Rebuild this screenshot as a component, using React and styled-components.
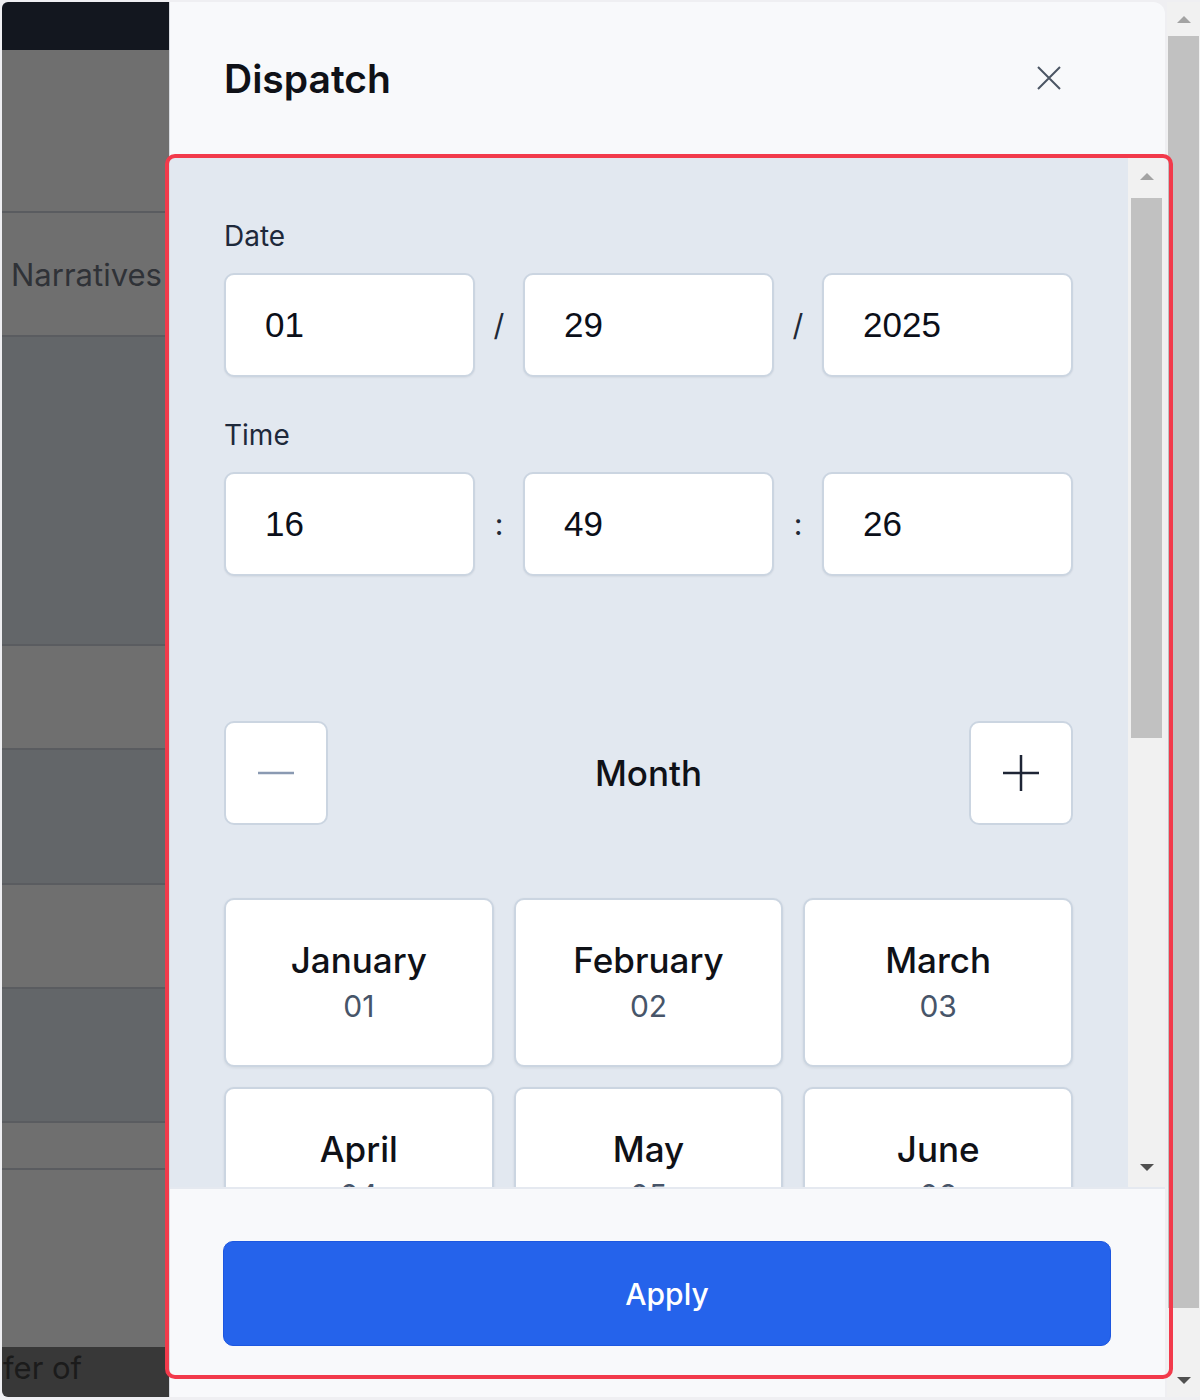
import React from "react";
import styled, { createGlobalStyle } from "styled-components";

const GlobalStyle = createGlobalStyle`
  * { box-sizing: border-box; }
  body {
    margin: 0;
    background: #efeff2;
    font-family: Inter, "Noto Sans", sans-serif;
  }
`;

const Screen = styled.div`
  position: relative;
  display: flex;
  width: 1200px;
  height: 1400px;
  padding: 2px 0 3px 2px;
  background: #efeff2;
`;

const Backdrop = styled.div`
  width: 167px;
  display: flex;
  flex-direction: column;
  border-radius: 6px 0 0 6px;
  overflow: hidden;
`;

const BackRow = styled.div`
  flex: ${(p) => (p.$grow ? 1 : "none")};
  height: ${(p) => p.$h}px;
  background: ${(p) => p.$bg};
  border-bottom: ${(p) => (p.$line ? "2px solid #5a5c60" : "none")};
  display: flex;
  align-items: center;
  padding-left: ${(p) => p.$pad ?? 9}px;
  padding-bottom: ${(p) => p.$lift || 0}px;
  font-size: 31px;
  color: ${(p) => p.$ink || "#2f3237"};
  white-space: nowrap;
  overflow: hidden;
`;

const Panel = styled.section`
  width: 996px;
  margin-right: 2px;
  display: flex;
  flex-direction: column;
  background: #f8f9fb;
  border-left: 1px solid #d9dce1;
  border-top-right-radius: 12px;
  overflow: hidden;
`;

const Header = styled.header`
  height: 154px;
  flex: none;
  display: flex;
  align-items: center;
  justify-content: space-between;
  padding: 0 104px 2px 54px;
`;

const Title = styled.h2`
  margin: 0;
  font-size: 39px;
  font-weight: 600;
  color: #0f1117;
`;

const Body = styled.div`
  flex: 1;
  display: flex;
  min-height: 0;
`;

const ScrollContent = styled.div`
  flex: 1;
  background: #e2e8f0;
  padding: 60px 55px 0 54px;
  overflow: hidden;
`;

const FieldLabel = styled.div`
  font-size: 28px;
  line-height: 40px;
  color: #1e293b;
  margin-bottom: 17px;
`;

const FieldRow = styled.div`
  display: grid;
  grid-template-columns: 1fr 48px 1fr 48px 1fr;
  margin-bottom: ${(p) => p.$gap}px;
`;

const Field = styled.input`
  height: 104px;
  width: 100%;
  border: 2px solid #cbd5e1;
  border-radius: 10px;
  background: #fff;
  padding: 0 39px;
  font-family: "Liberation Sans", Arial, sans-serif;
  font-size: 35px;
  color: #0b0f19;
  box-shadow: 0 1px 2px rgba(15, 23, 42, 0.06);
  outline: none;
`;

const Sep = styled.span`
  display: flex;
  align-items: center;
  justify-content: center;
  font-size: 30px;
  color: #1f2937;
`;

const NavRow = styled.div`
  display: flex;
  align-items: center;
  justify-content: space-between;
  margin-bottom: 73px;
`;

const StepButton = styled.button`
  width: 104px;
  height: 104px;
  display: flex;
  align-items: center;
  justify-content: center;
  background: #fff;
  border: 2px solid #cbd5e1;
  border-radius: 10px;
  padding: 0;
`;

const NavTitle = styled.div`
  font-size: 35px;
  font-weight: 500;
  color: #0f1117;
`;

const MonthGrid = styled.div`
  display: grid;
  grid-template-columns: repeat(3, 1fr);
  gap: 20px;
`;

const MonthCard = styled.button`
  height: 169px;
  display: flex;
  flex-direction: column;
  align-items: center;
  justify-content: center;
  gap: 4px;
  padding: 0 0 2px;
  background: #fff;
  border: 2px solid #cbd5e1;
  border-radius: 10px;
  box-shadow: 0 1px 3px rgba(15, 23, 42, 0.08);
  font-family: inherit;
`;

const MonthName = styled.span`
  font-size: 35px;
  line-height: 44px;
  font-weight: 500;
  color: #0f1117;
`;

const MonthNum = styled.span`
  font-size: 30px;
  line-height: 40px;
  color: #475569;
`;

const ScrollTrack = styled.div`
  width: ${(p) => p.$w}px;
  flex: none;
  display: flex;
  flex-direction: column;
  background: #f1f1f1;
`;

const ArrowBox = styled.div`
  height: ${(p) => p.$h}px;
  flex: none;
  display: flex;
  align-items: center;
  justify-content: center;
`;

const Arrow = styled.span`
  width: 0;
  height: 0;
  border-left: 7px solid transparent;
  border-right: 7px solid transparent;
  ${(p) => (p.$down ? "border-top" : "border-bottom")}: 7px solid ${(p) => p.$c};
`;

const Thumb = styled.div`
  height: ${(p) => p.$h}px;
  margin: ${(p) => p.$top || 0}px ${(p) => p.$m}px 0;
  background: #c1c1c1;
  flex: none;
`;

const Spacer = styled.div`
  flex: 1;
`;

const Footer = styled.footer`
  height: 210px;
  flex: none;
  border-top: 2px solid #e5e9f0;
  padding: 52px 54px 0 53px;
`;

const ApplyButton = styled.button`
  width: 100%;
  height: 105px;
  background: #2563eb;
  border: 1px solid #1d57e0;
  border-radius: 10px;
  color: #fff;
  font-family: inherit;
  font-size: 30px;
  font-weight: 500;
`;

const Outline = styled.div`
  position: absolute;
  left: 165px;
  top: 154px;
  width: 1008px;
  height: 1225px;
  border: 4px solid #f23a4b;
  border-radius: 10px;
  pointer-events: none;
`;

const months = [
  "January", "February", "March", "April", "May", "June",
  "July", "August", "September", "October", "November", "December",
];

const backRows = [
  { h: 48, bg: "#13171f" },
  { h: 163, bg: "#6f6f6f", line: true },
  { h: 124, bg: "#6f6f6f", line: true, text: "Narratives" },
  { h: 309, bg: "#636669", line: true },
  { h: 104, bg: "#6f6f6f", line: true },
  { h: 135, bg: "#636669", line: true },
  { h: 104, bg: "#6f6f6f", line: true },
  { h: 134, bg: "#636669", line: true },
  { h: 47, bg: "#6f6f6f", line: true },
  { h: 177, bg: "#6f6f6f", grow: true },
  { h: 50, bg: "#383838", text: "fer of", ink: "#1b1b1b", pad: 1, lift: 10 },
];

export default function App() {
  return (
    <>
      <GlobalStyle />
      <Screen>
        <Backdrop>
          {backRows.map((r, i) => (
            <BackRow
              key={i}
              $h={r.h}
              $bg={r.bg}
              $line={r.line}
              $grow={r.grow}
              $ink={r.ink}
              $pad={r.pad}
              $lift={r.lift}
            >
              {r.text}
            </BackRow>
          ))}
        </Backdrop>

        <Panel>
          <Header>
            <Title>Dispatch</Title>
            <svg width="24" height="24" viewBox="0 0 24 24">
              <path d="M1 1L23 23M23 1L1 23" stroke="#4b5563" strokeWidth="2" />
            </svg>
          </Header>

          <Body>
            <ScrollContent>
              <FieldLabel>Date</FieldLabel>
              <FieldRow $gap={38}>
                <Field defaultValue="01" readOnly />
                <Sep>/</Sep>
                <Field defaultValue="29" readOnly />
                <Sep>/</Sep>
                <Field defaultValue="2025" readOnly />
              </FieldRow>

              <FieldLabel>Time</FieldLabel>
              <FieldRow $gap={145}>
                <Field defaultValue="16" readOnly />
                <Sep>:</Sep>
                <Field defaultValue="49" readOnly />
                <Sep>:</Sep>
                <Field defaultValue="26" readOnly />
              </FieldRow>

              <NavRow>
                <StepButton>
                  <svg width="36" height="4" viewBox="0 0 36 4">
                    <path d="M0 2H36" stroke="#8a9ab2" strokeWidth="2.5" />
                  </svg>
                </StepButton>
                <NavTitle>Month</NavTitle>
                <StepButton>
                  <svg width="36" height="36" viewBox="0 0 36 36">
                    <path d="M0 18H36M18 0V36" stroke="#1e2535" strokeWidth="2.5" />
                  </svg>
                </StepButton>
              </NavRow>

              <MonthGrid>
                {months.map((m, i) => (
                  <MonthCard key={m}>
                    <MonthName>{m}</MonthName>
                    <MonthNum>{String(i + 1).padStart(2, "0")}</MonthNum>
                  </MonthCard>
                ))}
              </MonthGrid>
            </ScrollContent>

            <ScrollTrack $w={37}>
              <ArrowBox $h={40}>
                <Arrow $c="#a3a3a3" />
              </ArrowBox>
              <Thumb $h={540} $m={3} $top={2} />
              <Spacer />
              <ArrowBox $h={40}>
                <Arrow $down $c="#505050" />
              </ArrowBox>
            </ScrollTrack>
          </Body>

          <Footer>
            <ApplyButton>Apply</ApplyButton>
          </Footer>
        </Panel>

        <ScrollTrack $w={33}>
          <ArrowBox $h={34}>
            <Arrow $c="#a3a3a3" />
          </ArrowBox>
          <Thumb $h={1272} $m={1} />
          <Spacer />
          <ArrowBox $h={34}>
            <Arrow $down $c="#505050" />
          </ArrowBox>
        </ScrollTrack>

        <Outline />
      </Screen>
    </>
  );
}
